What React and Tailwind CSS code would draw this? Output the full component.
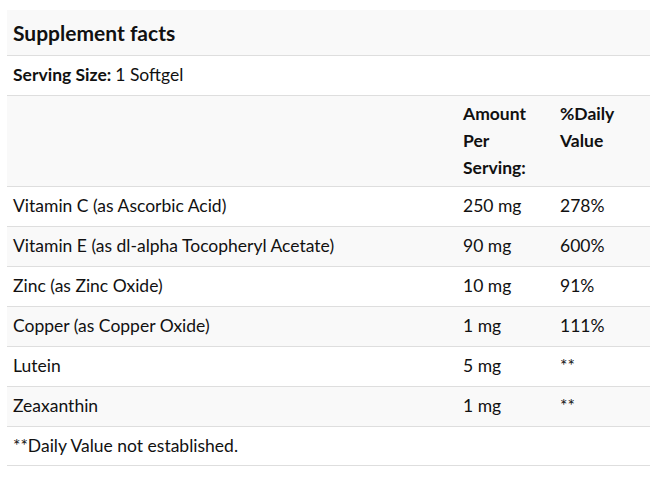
const rows = [
  { name: "Vitamin C (as Ascorbic Acid)", amount: "250 mg", dv: "278%" },
  { name: "Vitamin E (as dl-alpha Tocopheryl Acetate)", amount: "90 mg", dv: "600%" },
  { name: "Zinc (as Zinc Oxide)", amount: "10 mg", dv: "91%" },
  { name: "Copper (as Copper Oxide)", amount: "1 mg", dv: "111%" },
  { name: "Lutein", amount: "5 mg", dv: "**" },
  { name: "Zeaxanthin", amount: "1 mg", dv: "**" },
];

export default function App() {
  return (
    <div
      className="w-[657px] h-[482px] bg-white pt-[10px] pl-[7px] text-[#111]"
      style={{ fontFamily: "Lato, 'Open Sans', sans-serif" }}
    >
      <div className="w-[643px]">
        {/* Title */}
        <div className="h-[46px] bg-[#f9f9f9] border-b border-[#dedede] flex items-center px-[6px]">
          <h2 className="text-[21px] font-bold">Supplement facts</h2>
        </div>

        {/* Serving size */}
        <div className="h-[40px] border-b border-[#dedede] flex items-center px-[6px] text-[17.5px]">
          <span className="font-bold">Serving Size:</span>
          <span className="ml-1">1 Softgel</span>
        </div>

        {/* Header */}
        <div className="h-[91px] bg-[#f9f9f9] border-b border-[#dedede] grid grid-cols-[450px_97px_96px] text-[17.5px] font-bold leading-[27px] pt-[4px]">
          <div />
          <div className="px-[6px]">
            Amount
            <br />
            Per
            <br />
            Serving:
          </div>
          <div className="px-[6px]">
            %Daily
            <br />
            Value
          </div>
        </div>

        {/* Rows */}
        {rows.map((r, i) => (
          <div
            key={r.name}
            className={`h-[40px] border-b border-[#dedede] grid grid-cols-[450px_97px_96px] items-center text-[17.5px] ${
              i % 2 === 1 ? "bg-[#f9f9f9]" : "bg-white"
            }`}
          >
            <div className="px-[6px]">{r.name}</div>
            <div className="px-[6px]">{r.amount}</div>
            <div className="px-[6px]">{r.dv}</div>
          </div>
        ))}

        {/* Footnote */}
        <div className="h-[39px] border-b border-[#dedede] flex items-center px-[6px] text-[17.5px]">
          **Daily Value not established.
        </div>
      </div>
    </div>
  );
}
